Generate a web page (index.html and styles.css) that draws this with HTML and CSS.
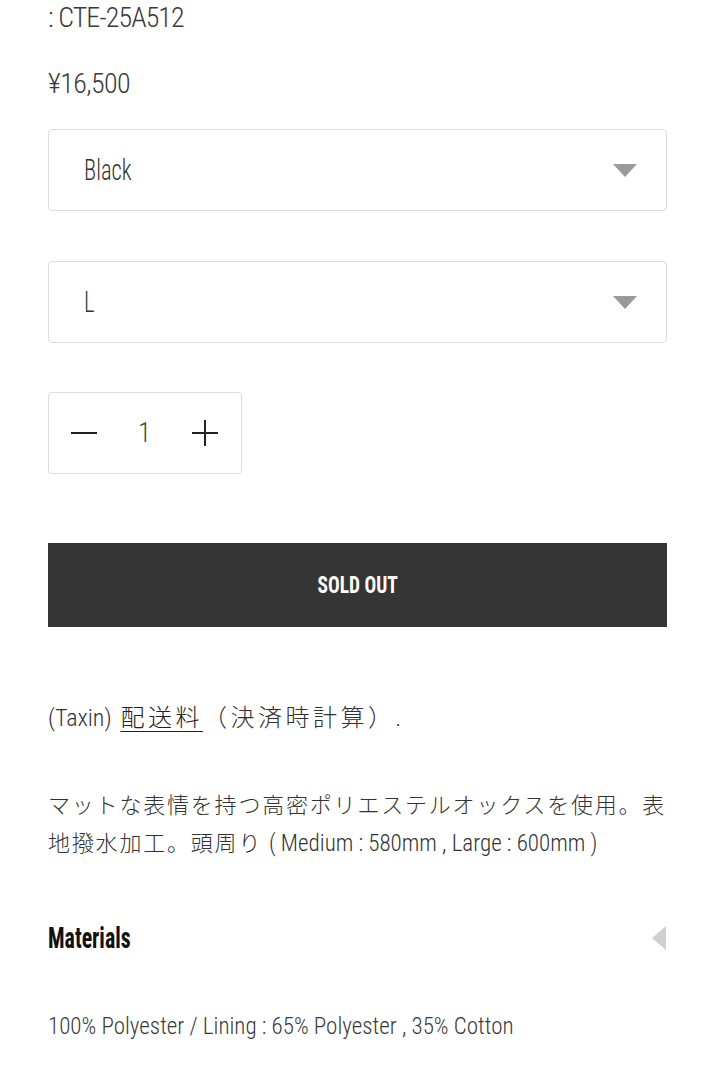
FILE: index.html
```html
<!DOCTYPE html>
<html lang="ja">
<head>
<meta charset="utf-8">
<title>Product</title>
<link rel="stylesheet" href="styles.css">
</head>
<body>
<main class="product">
  <div class="sku">: CTE-25A512</div>
  <div class="price">¥16,500</div>

  <div class="select select-first">
    <span class="select-value">Black</span>
    <svg class="select-arrow" width="24" height="13" viewBox="0 0 24 13"><path d="M0 0 H24 L12 13 Z" fill="#9a9a9a"/></svg>
  </div>

  <div class="select select-second">
    <span class="select-value">L</span>
    <svg class="select-arrow" width="24" height="13" viewBox="0 0 24 13"><path d="M0 0 H24 L12 13 Z" fill="#9a9a9a"/></svg>
  </div>

  <div class="qty">
    <svg class="qty-btn" width="28" height="28" viewBox="0 0 28 28"><path d="M1 14 H27" stroke="#222" stroke-width="2"/></svg>
    <span class="qty-value">1</span>
    <svg class="qty-btn" width="28" height="28" viewBox="0 0 28 28"><path d="M1 14 H27 M14 1 V27" stroke="#222" stroke-width="2"/></svg>
  </div>

  <button class="soldout" type="button"><span class="soldout-label">SOLD OUT</span></button>

  <p class="tax"><span class="latin tax-latin">(Taxin)</span> <a class="tax-link" href="#">配送料</a>（決済時計算）<span class="latin">.</span></p>

  <p class="desc">マットな表情を持つ高密ポリエステルオックスを使用。表地撥水加工。頭周り <span class="latin">( Medium : 580mm , Large : 600mm )</span></p>

  <div class="acc-head">
    <h3 class="acc-title">Materials</h3>
    <svg class="acc-arrow" width="14" height="24" viewBox="0 0 14 24"><path d="M14 0 V24 L0 12 Z" fill="#cfcfcf"/></svg>
  </div>

  <p class="materials">100% Polyester / Lining : 65% Polyester , 35% Cotton</p>
</main>
</body>
</html>
```
FILE: styles.css
```css
html, body {
  margin: 0;
  padding: 0;
  background: #ffffff;
}

body {
  font-family: "Roboto", "Noto Sans CJK JP", sans-serif;
  font-stretch: condensed;
  font-weight: 300;
  color: #333333;
}

.product {
  padding: 0 49px 0 48px;
}

.sku {
  font-size: 28px;
  line-height: 36px;
  color: #3a3a3a;
  letter-spacing: -0.9px;
}

.price {
  margin-top: 30px;
  font-size: 28px;
  line-height: 36px;
  color: #3a3a3a;
  letter-spacing: -0.6px;
}

.select {
  box-sizing: border-box;
  height: 82px;
  border: 1px solid #dcdcdc;
  border-radius: 4px;
  display: flex;
  align-items: center;
  justify-content: space-between;
  padding: 0 29px 0 35px;
}

.select-first {
  margin-top: 27px;
}

.select-second {
  margin-top: 50px;
}

.select-value {
  display: inline-block;
  font-size: 29px;
  color: #333333;
  transform: scaleX(0.78);
  transform-origin: left center;
}

.qty {
  box-sizing: border-box;
  margin-top: 49px;
  width: 194px;
  height: 82px;
  border: 1px solid #dcdcdc;
  border-radius: 4px;
  display: flex;
  align-items: center;
  justify-content: space-between;
  padding: 0 22px 0 21px;
}

.qty-value {
  font-size: 27px;
  color: #444444;
}

.soldout {
  display: flex;
  align-items: center;
  justify-content: center;
  width: 100%;
  height: 84px;
  margin-top: 69px;
  border: 0;
  background: #353535;
  padding: 0;
}

.soldout-label {
  display: inline-block;
  font-family: "Roboto", sans-serif;
  font-stretch: condensed;
  font-weight: 700;
  font-size: 24px;
  color: #ffffff;
  transform: scaleX(0.81);
}

.tax {
  margin: 73px 0 0;
  font-size: 24px;
  line-height: 36px;
  letter-spacing: 3.5px;
  color: #333333;
}

.tax-link {
  color: #222222;
  text-decoration: underline;
  text-decoration-thickness: 1px;
  text-underline-offset: 5px;
}

.desc {
  margin: 50px -10px 0 0;
  font-size: 22px;
  line-height: 38px;
  letter-spacing: 1.8px;
  color: #333333;
}

.latin {
  font-size: 23px;
  letter-spacing: 0;
}

.tax-latin {
  font-size: 24px;
}

.acc-head {
  margin-top: 57px;
  display: flex;
  align-items: center;
  justify-content: space-between;
  height: 36px;
}

.acc-title {
  margin: 0;
  display: inline-block;
  font-size: 29px;
  font-weight: 700;
  color: #111111;
  transform: scaleX(0.755);
  transform-origin: left center;
}

.acc-arrow {
  margin-right: 1px;
}

.materials {
  margin: 53px 0 0;
  font-size: 23px;
  line-height: 36px;
  color: #3a3a3a;
}
```
